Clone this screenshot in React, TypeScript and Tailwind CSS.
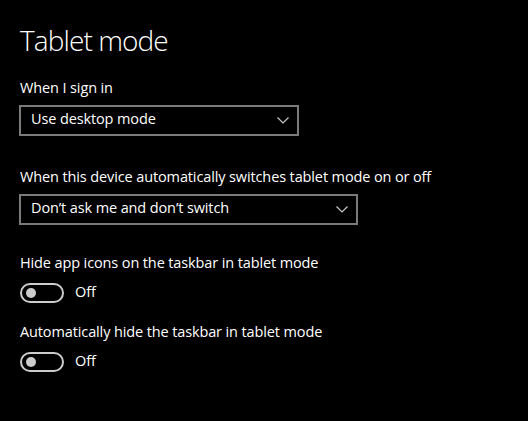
import { useState } from 'react';

// Settings > Tablet mode (dark theme)

function Dropdown({ value, width }: { value: string; width: string }) {
  return (
    <div
      className={`flex h-[31px] items-center justify-between border-2 border-[#7a7a7a] bg-black pb-[4px] pl-[10px] pr-[8px] text-white ${width}`}
    >
      <span className="text-[14.5px] leading-[20px] tracking-[-0.12px]">{value}</span>
      <svg width="12" height="7" viewBox="0 0 12 7" className="mt-[4px]">
        <path d="M0.5 0.5 L6 6 L11.5 0.5" fill="none" stroke="#c8c8c8" strokeWidth="1.2" />
      </svg>
    </div>
  );
}

function Toggle({ label }: { label: string }) {
  const [on, setOn] = useState(false);
  return (
    <div className="flex flex-col">
      <p className="text-[14.5px] leading-[20px] tracking-[-0.12px] text-white">{label}</p>
      <div className="mt-[10px] flex h-[20px] items-center gap-[11px]">
        <button
          onClick={() => setOn(!on)}
          className="flex h-[20px] w-[44px] items-center rounded-full border-2 border-[#cccccc] px-[4px]"
        >
          <span className="h-[10px] w-[10px] rounded-full bg-[#cccccc]" />
        </button>
        <span className="pb-[2px] text-[14.5px] leading-[20px] tracking-[-0.12px] text-white">
          {on ? 'On' : 'Off'}
        </span>
      </div>
    </div>
  );
}

export default function App() {
  return (
    <div className="h-[421px] w-full overflow-hidden bg-black px-[19px] pt-[21px] font-['Open_Sans',sans-serif] text-white">
      <h1 className="pl-[1px] text-[28px] font-light leading-[38px] tracking-[-0.9px]">Tablet mode</h1>

      <div className="mt-[19px]">
        <p className="pl-[1px] text-[14.5px] leading-[20px] tracking-[-0.12px]">When I sign in</p>
        <div className="mt-[7px]">
          <Dropdown value="Use desktop mode" width="w-[280px]" />
        </div>
      </div>

      <div className="mt-[31px]">
        <p className="pl-[1px] text-[14.5px] leading-[20px] tracking-[-0.12px]">
          When this device automatically switches tablet mode on or off
        </p>
        <div className="mt-[7px]">
          <Dropdown value="Don’t ask me and don’t switch" width="w-[339px]" />
        </div>
      </div>

      <div className="mt-[28px] flex flex-col gap-[19px] pl-[1px]">
        <Toggle label="Hide app icons on the taskbar in tablet mode" />
        <Toggle label="Automatically hide the taskbar in tablet mode" />
      </div>
    </div>
  );
}
